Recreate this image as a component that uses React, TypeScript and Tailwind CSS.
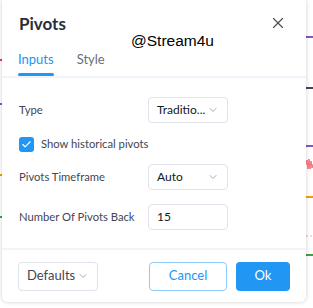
import { X, ChevronDown, Check } from "lucide-react";

const font = { fontFamily: '"Lato", "Liberation Sans", sans-serif' };

const Select = ({ value }: { value: string }) => (
  <div className="flex h-[26px] w-[80px] items-center justify-between rounded-[4px] border border-[#e0e3eb] pl-[8px] pr-[8px] text-[12px] text-[#131722]">
    <span>{value}</span>
    <ChevronDown size={12} strokeWidth={1.3} className="text-[#787b86]" />
  </div>
);

export default function App() {
  return (
    <div className="relative h-[308px] w-[313px] overflow-hidden bg-white" style={font}>
      {/* chart peeking out behind the dialog */}
      <svg className="absolute inset-0" width="313" height="308">
        <line x1="0" y1="60" x2="3" y2="60" stroke="#f23645" strokeWidth="2" />
        <line x1="0" y1="104" x2="3" y2="104" stroke="#7e57c2" strokeWidth="2" />
        <line x1="0" y1="175" x2="3" y2="175" stroke="#ff9800" strokeWidth="2" />
        <line x1="0" y1="217" x2="3" y2="217" stroke="#43a047" strokeWidth="2" />
        <line x1="306" y1="37" x2="313" y2="37" stroke="#7e57c2" strokeWidth="2" />
        <line x1="306" y1="88" x2="313" y2="88" stroke="#434651" strokeWidth="2" />
        <line x1="306" y1="146" x2="313" y2="146" stroke="#7e57c2" strokeWidth="2" />
        <path d="M306 165 l1 -5 l1 9 l1 -10 l1 10 l1 -8 l1 7 l1 -4" stroke="#f23645" strokeWidth="1" fill="none" opacity="0.7" />
        <line x1="306" y1="197" x2="313" y2="197" stroke="#ff9800" strokeWidth="2" />
        <line x1="306" y1="236" x2="313" y2="236" stroke="#f7a5ab" strokeWidth="1" strokeDasharray="2 2" />
        <line x1="306" y1="255" x2="313" y2="255" stroke="#43a047" strokeWidth="2" />
      </svg>

      <div className="absolute left-[2px] top-0 flex h-[302px] w-[304px] flex-col rounded-b-[6px] bg-white shadow-[0_0_4px_rgba(0,0,0,0.2)]">
        {/* header */}
        <div className="relative flex h-[44px] items-end justify-between pl-[17px] pr-[19px]">
          <span className="pb-[8px] text-[17px] font-bold text-[#2a2e39]">Pivots</span>
          <X size={18} strokeWidth={1.5} className="mb-[12px] text-[#4a4a4a]" />
          <span className="absolute left-[129px] top-[29px] text-[15.5px] text-black" style={{ fontFamily: '"Liberation Sans", Arial, sans-serif' }}>
            @Stream4u
          </span>
        </div>
        <div className="flex h-[34px] gap-[23px] border-b-2 border-[#f0f3fa] pl-[16px] text-[13px]">
          <div className="flex flex-col justify-between">
            <span className="pt-[6px] text-[#2196f3]">Inputs</span>
            <div className="h-[3px] rounded-full bg-[#2196f3]" />
          </div>
          <span className="pt-[6px] text-[#6a6d78]">Style</span>
        </div>

        {/* body */}
        <div className="flex flex-1 flex-col border-b-2 border-[#f0f3fa] pl-[17px] pt-[19px] text-[11.25px] text-[#434651]">
          <div className="flex h-[26px] items-center whitespace-nowrap">
            <span className="w-[129px]">Type</span>
            <Select value="Traditio..." />
          </div>
          <div className="mt-[13px] flex h-[17px] items-center gap-[7px]">
            <div className="flex h-[15px] w-[15px] items-center justify-center rounded-[3px] bg-[#2196f3]">
              <Check size={11} strokeWidth={2.5} className="text-white" />
            </div>
            <span>Show historical pivots</span>
          </div>
          <div className="mt-[11px] flex h-[26px] items-center whitespace-nowrap">
            <span className="w-[129px]">Pivots Timeframe</span>
            <Select value="Auto" />
          </div>
          <div className="mt-[14px] flex h-[26px] items-center whitespace-nowrap">
            <span className="w-[129px]">Number Of Pivots Back</span>
            <div className="flex h-[26px] w-[80px] items-center rounded-[4px] border border-[#e0e3eb] pl-[8px] text-[12px] text-[#131722]">
              15
            </div>
          </div>
        </div>

        {/* footer */}
        <div className="flex h-[52px] items-center justify-between pl-[16px] pr-[16px]">
          <div className="flex h-[29px] w-[80px] items-center justify-between rounded-[4px] border border-[#e0e3eb] pl-[8px] pr-[8px] text-[13px] text-[#434651]">
            <span>Defaults</span>
            <ChevronDown size={12} strokeWidth={1.3} className="text-[#787b86]" />
          </div>
          <div className="flex gap-[9px]">
            <button className="flex h-[29px] w-[78px] items-center justify-center rounded-[4px] border border-[#90caf9] text-[13px] text-[#2196f3]">
              Cancel
            </button>
            <button className="flex h-[29px] w-[54px] items-center justify-center rounded-[4px] bg-[#2196f3] text-[13px] text-white">
              Ok
            </button>
          </div>
        </div>
      </div>
    </div>
  );
}
